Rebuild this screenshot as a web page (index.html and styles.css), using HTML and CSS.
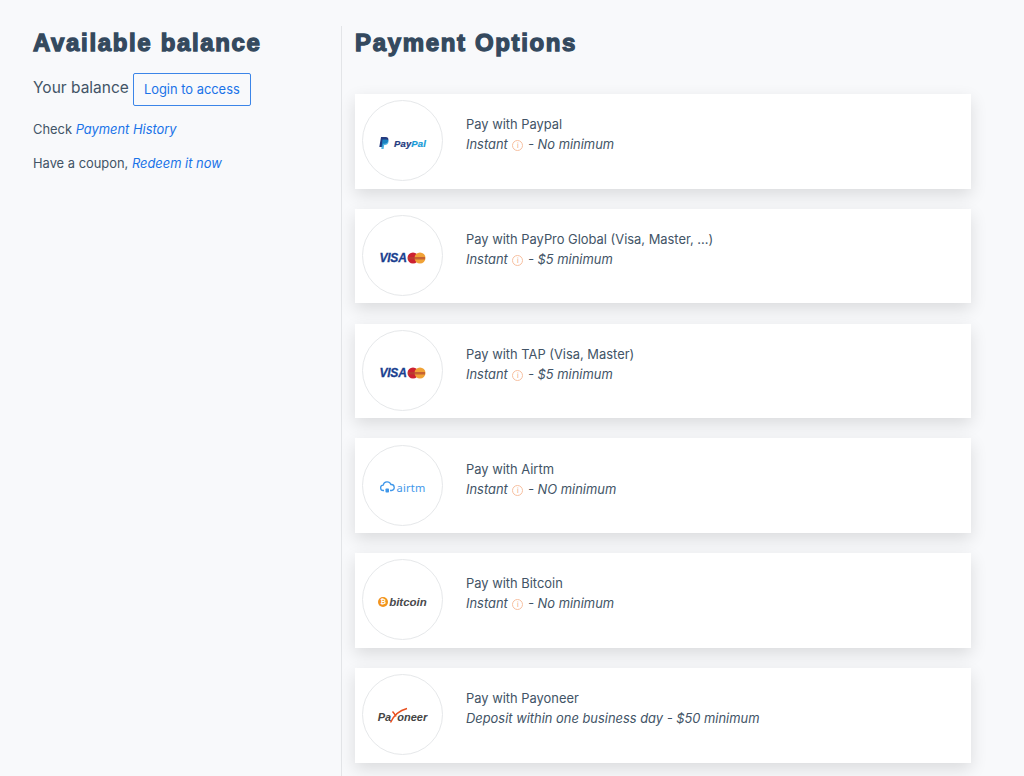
FILE: index.html
```html
<!DOCTYPE html>
<html lang="en">
<head>
<meta charset="utf-8">
<title>Payment Options</title>
<link rel="stylesheet" href="styles.css">
</head>
<body>
<main class="page">
  <aside class="side">
    <h2 class="title">Available balance</h2>
    <div class="balance"><span>Your balance</span><a class="btn" href="#">Login to access</a></div>
    <p class="line">Check <a href="#"><em>Payment History</em></a></p>
    <p class="line">Have a coupon, <a href="#"><em>Redeem it now</em></a></p>
  </aside>
  <section class="content">
    <h2 class="title">Payment Options</h2>
    <ul class="list">
      <li class="card">
        <div class="logo">
          <svg class="pp-mark" width="10" height="12" viewBox="0 0 10 12"><path d="M2 0h4.500c2.500 0 3.300 1.500 2.800 3.500-.5 2.200-2 3.200-4 3.200H4L3.300 10H.3z" fill="#253b80"/><path d="M3.500 2.500h4c1.500 0 2.300.8 2 2.500-.4 2-1.800 3-3.500 3H5.200L4.600 12H2.300z" fill="#179bd7" opacity=".75"/></svg>
          <span class="pp-text"><span class="pp-a">Pay</span><span class="pp-b">Pal</span></span>
        </div>
        <div class="info"><div>Pay with Paypal</div><div class="meta"><em>Instant</em> <span class="tip">i</span> <em>- No minimum</em></div></div>
      </li>
      <li class="card">
        <div class="logo">
          <span class="visa">VISA</span>
          <svg class="mc" width="19" height="12" viewBox="0 0 19 12"><circle cx="6" cy="6" r="5.500" fill="#cc2131"/><circle cx="13" cy="6" r="5.500" fill="#f0a236"/><rect x="1" y="5" width="17" height="2.500" fill="#b5472f" opacity=".7"/></svg>
        </div>
        <div class="info"><div>Pay with PayPro Global (Visa, Master, ...)</div><div class="meta"><em>Instant</em> <span class="tip">i</span> <em>- $5 minimum</em></div></div>
      </li>
      <li class="card">
        <div class="logo">
          <span class="visa">VISA</span>
          <svg class="mc" width="19" height="12" viewBox="0 0 19 12"><circle cx="6" cy="6" r="5.500" fill="#cc2131"/><circle cx="13" cy="6" r="5.500" fill="#f0a236"/><rect x="1" y="5" width="17" height="2.500" fill="#b5472f" opacity=".7"/></svg>
        </div>
        <div class="info"><div>Pay with TAP (Visa, Master)</div><div class="meta"><em>Instant</em> <span class="tip">i</span> <em>- $5 minimum</em></div></div>
      </li>
      <li class="card">
        <div class="logo">
          <svg width="15" height="13" viewBox="0 0 15 13"><path d="M4 9.500H3.500a2.700 2.700 0 0 1-.3-5.400 4 4 0 0 1 7.700-.6 3 3 0 0 1 .6 6H10" fill="none" stroke="#3f97ea" stroke-width="1.300"/><rect x="5.500" y="7.500" width="3.500" height="4" rx=".8" fill="#3f97ea"/></svg>
          <span class="airtm">airtm</span>
        </div>
        <div class="info"><div>Pay with Airtm</div><div class="meta"><em>Instant</em> <span class="tip">i</span> <em>- NO minimum</em></div></div>
      </li>
      <li class="card">
        <div class="logo">
          <span class="btc-mark">₿</span>
          <span class="btc-text">bitcoin</span>
        </div>
        <div class="info"><div>Pay with Bitcoin</div><div class="meta"><em>Instant</em> <span class="tip">i</span> <em>- No minimum</em></div></div>
      </li>
      <li class="card">
        <div class="logo logo-payoneer">
          <span class="pyr">Pa</span><svg class="pyr-y" width="6" height="15" viewBox="0 0 6 15"><path d="M1.500 3.500C3 5 4 6.500 5 8.500M-.5 14.500C2.500 8 8 2.500 16 .5" fill="none" stroke="#e8501f" stroke-width="1.500"/></svg><span class="pyr">oneer</span>
        </div>
        <div class="info"><div>Pay with Payoneer</div><div class="meta"><em>Deposit within one business day - $50 minimum</em></div></div>
      </li>
    </ul>
  </section>
</main>
</body>
</html>
```
FILE: styles.css
```css
* { box-sizing: border-box; }
html, body { margin: 0; height: 776px; overflow: hidden; }
body {
  background: #f8f9fb;
  color: #425466;
  font-family: Inter, "Noto Sans", sans-serif;
  font-size: 12.9px;
  line-height: 20px;
}
a { color: #1a73e8; text-decoration: none; }
.page { display: flex; align-items: flex-start; padding-top: 26px; }
.side { width: 342px; height: 750px; padding: 0 0 0 33px; border-right: 1px solid #e3e5e8; }
.content { width: 616px; margin-left: 13px; }
.title {
  margin: 0;
  height: 33px;
  font-family: "Liberation Sans", Arial, sans-serif;
  font-weight: 700;
  font-size: 24px;
  line-height: 33px;
  letter-spacing: 1.65px;
  color: #34495e;
  -webkit-text-stroke: 1.3px #34495e;
}
.balance { display: flex; align-items: flex-start; margin-top: 15px; font-size: 15.5px; line-height: 28px; }
.btn {
  margin-top: -1px;
  margin-left: 4px;
  width: 118px;
  height: 33px;
  border: 1px solid #3b85e8;
  border-radius: 2px;
  text-align: center;
  font-size: 12.9px;
  line-height: 31px;
}
.line { margin: 0; padding-top: 6px; height: 34px; line-height: 24px; }
.balance + .line { margin-top: 6px; }
.list { list-style: none; margin: 35px 0 0; padding: 0; display: flex; flex-direction: column; gap: 20.2px; }
.card {
  display: flex;
  align-items: center;
  height: 94.6px;
  background: #fff;
  padding: 0 7px;
  box-shadow: 0 6px 16px rgba(0, 0, 0, 0.12);
}
.logo {
  flex: none;
  width: 81px;
  height: 81px;
  margin-top: -1px;
  border: 1px solid #e6e8ea;
  border-radius: 50%;
  background: #fff;
  display: flex;
  align-items: center;
  justify-content: center;
  gap: 2px;
  padding-top: 5px;
}
.info { margin-left: 23px; margin-top: -12px; }
.tip {
  display: inline-block;
  width: 11px;
  height: 11px;
  margin: 0 1px;
  border: 1px solid #f7bfa0;
  border-radius: 50%;
  color: #f0a27a;
  font-size: 7px;
  line-height: 9px;
  text-align: center;
  vertical-align: 1px;
}
.pp-text { font: italic 700 9.5px "Liberation Sans", sans-serif; margin-left: 3px; letter-spacing: 0.1px; -webkit-text-stroke: 0.2px currentColor; }
.pp-a { color: #253b80; }
.pp-b { color: #179bd7; }
.visa { font: italic 700 12px "Liberation Sans", sans-serif; color: #1a3f8f; letter-spacing: -0.2px; -webkit-text-stroke: 0.3px #1a3f8f; }
.mc { margin-left: -2px; }
.airtm { font: 400 11px "Noto Sans", sans-serif; color: #3f97ea; letter-spacing: 0.2px; }
.btc-mark {
  width: 10px;
  height: 10px;
  border-radius: 50%;
  background: #f2931c;
  color: #fff;
  font: 700 7px/10px "DejaVu Sans", sans-serif;
  text-align: center;
}
.btc-text { font: italic 700 11.5px "Liberation Sans", sans-serif; color: #4a4a4d; margin-left: -1px; }
.logo-payoneer { gap: 0; }
.pyr { font: italic 700 11px "Liberation Sans", sans-serif; color: #444; }
.pyr-y { margin-top: -4px; overflow: visible; }
```
